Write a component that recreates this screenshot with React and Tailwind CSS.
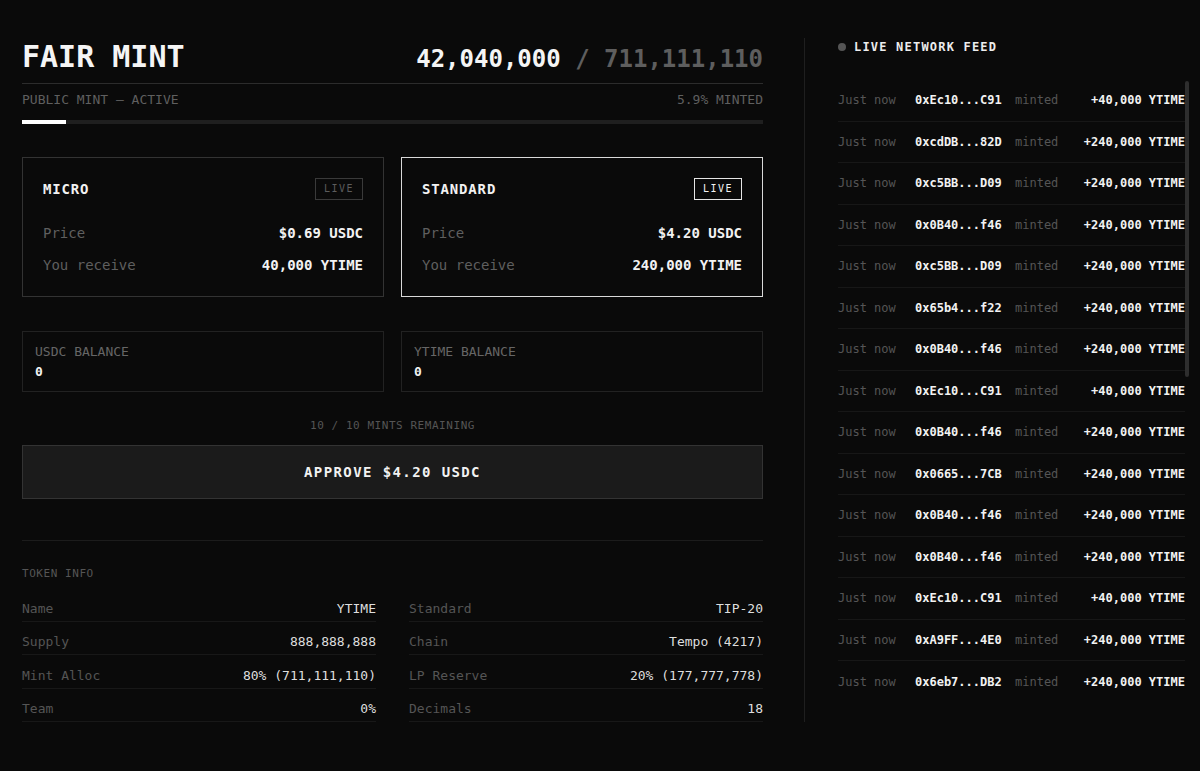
import React from 'react'

const feed = [
  ['0xEc10...C91', '+40,000'],
  ['0xcdDB...82D', '+240,000'],
  ['0xc5BB...D09', '+240,000'],
  ['0x0B40...f46', '+240,000'],
  ['0xc5BB...D09', '+240,000'],
  ['0x65b4...f22', '+240,000'],
  ['0x0B40...f46', '+240,000'],
  ['0xEc10...C91', '+40,000'],
  ['0x0B40...f46', '+240,000'],
  ['0x0665...7CB', '+240,000'],
  ['0x0B40...f46', '+240,000'],
  ['0x0B40...f46', '+240,000'],
  ['0xEc10...C91', '+40,000'],
  ['0xA9FF...4E0', '+240,000'],
  ['0x6eb7...DB2', '+240,000'],
]

const tokenInfo = [
  [['Name', 'YTIME'], ['Standard', 'TIP-20']],
  [['Supply', '888,888,888'], ['Chain', 'Tempo (4217)']],
  [['Mint Alloc', '80% (711,111,110)'], ['LP Reserve', '20% (177,777,778)']],
  [['Team', '0%'], ['Decimals', '18']],
]

const TierCard = ({name, price, receive, active}) => (
  <div className={`border px-5 pt-5 pb-[21px] ${active ? 'border-[#d9d9d9]' : 'border-[#333333]'}`}>
    <div className="flex items-center justify-between">
      <span className="text-sm leading-5 font-bold tracking-[0.06em] text-[#f2f2f2]">{name}</span>
      <span
        className={`border px-[8px] py-[3px] text-[10px] leading-[14px] tracking-[0.15em] ${
          active ? 'border-[#e5e5e5] text-[#f2f2f2]' : 'border-[#3a3a3a] text-[#5c5c5c]'
        }`}
      >
        LIVE
      </span>
    </div>
    <div className="mt-[23px] flex justify-between text-sm leading-5">
      <span className="text-[#5f5f5f]">Price</span>
      <span className="font-bold text-[#f2f2f2]">{price}</span>
    </div>
    <div className="mt-3 flex justify-between text-sm leading-5">
      <span className="text-[#5f5f5f]">You receive</span>
      <span className="font-bold text-[#f2f2f2]">{receive}</span>
    </div>
  </div>
)

const Balance = ({label}) => (
  <div className="border border-[#222222] px-3 pt-[10px] pb-[9px] text-[13px] leading-5">
    <div className="text-[#666666]">{label}</div>
    <div className="font-bold text-[#f2f2f2]">0</div>
  </div>
)

export default function App() {
  return (
    <div className="min-h-screen bg-[#0a0a0a] font-['DejaVu_Sans_Mono',monospace] text-[#f2f2f2]">
      <div className="flex pl-[22px] pr-[11px] pt-[38px]">
        {/* mint panel */}
        <div className="w-[741px] pt-px">
          <div className="flex items-baseline justify-between border-b border-[#2c2c2c] pb-2">
            <h1 className="text-3xl font-bold leading-9 text-[#f5f5f5]">FAIR MINT</h1>
            <div className="text-2xl font-bold leading-8">
              <span className="text-[#f5f5f5]">42,040,000</span>
              <span className="text-[#5e5e5e]"> / 711,111,110</span>
            </div>
          </div>
          <div className="mt-[6px] flex justify-between text-[13px] leading-5 text-[#5f5f5f]">
            <span>PUBLIC MINT — ACTIVE</span>
            <span>5.9% MINTED</span>
          </div>
          <div className="mt-[10px] h-1 bg-[#1f1f1f]">
            <div className="h-1 bg-white" style={{width: '5.9%'}}></div>
          </div>

          <div className="mt-[33px] grid grid-cols-2 gap-[17px]">
            <TierCard name="MICRO" price="$0.69 USDC" receive="40,000 YTIME" />
            <TierCard name="STANDARD" price="$4.20 USDC" receive="240,000 YTIME" active />
          </div>

          <div className="mt-[34px] grid grid-cols-2 gap-[17px]">
            <Balance label="USDC BALANCE" />
            <Balance label="YTIME BALANCE" />
          </div>

          <p className="mt-[26px] text-center text-[11px] leading-4 tracking-[0.05em] text-[#555555]">
            10 / 10 MINTS REMAINING
          </p>
          <button
            type="button"
            className="mt-[11px] w-full border border-[#333333] bg-[#1b1b1b] py-4 text-sm leading-5 font-bold tracking-[0.1em] text-[#f2f2f2]"
          >
            APPROVE $4.20 USDC
          </button>

          <div className="mt-[41px] h-px bg-[#1c1c1c]"></div>

          <p className="mt-[25px] text-[11px] leading-4 tracking-[0.05em] text-[#555555]">TOKEN INFO</p>
          <div className="mt-[6px] grid grid-cols-2 gap-x-[33px]">
            {tokenInfo.map((row) =>
              row.map(([k, v]) => (
                <div
                  key={k}
                  className="flex h-[33.5px] items-end justify-between border-b border-[#181818] pb-[4px] text-[13px] leading-4"
                >
                  <span className="text-[#555555]">{k}</span>
                  <span className="text-[#dedede]">{v}</span>
                </div>
              ))
            )}
          </div>
        </div>

        {/* live feed */}
        <div className="ml-[41px] flex-1 border-l border-[#1f1f1f] pl-[33px] pt-px">
          <div className="flex items-center gap-2">
            <span className="h-2 w-2 rounded-full bg-[#555555]"></span>
            <span className="text-xs leading-4 font-bold tracking-[0.1em] text-[#ededed]">LIVE NETWORK FEED</span>
          </div>
          <div className="relative mt-[25px]">
            <div className="mr-[4px]">
              {feed.map(([addr, amt], i) => (
                <div
                  key={i}
                  className="flex h-[41.5px] items-center border-b border-[#171717] text-xs leading-4 last:border-b-0"
                >
                  <span className="w-[77px] text-[#555555]">Just now</span>
                  <span className="w-[100px] font-bold text-[#f2f2f2]">{addr}</span>
                  <span className="text-[#555555]">minted</span>
                  <span className="ml-auto font-bold text-[#f2f2f2]">{amt} YTIME</span>
                </div>
              ))}
            </div>
            <div className="absolute right-0 top-px h-[296px] w-[4px] rounded-full bg-[#2e2e2e]"></div>
          </div>
        </div>
      </div>
    </div>
  )
}
